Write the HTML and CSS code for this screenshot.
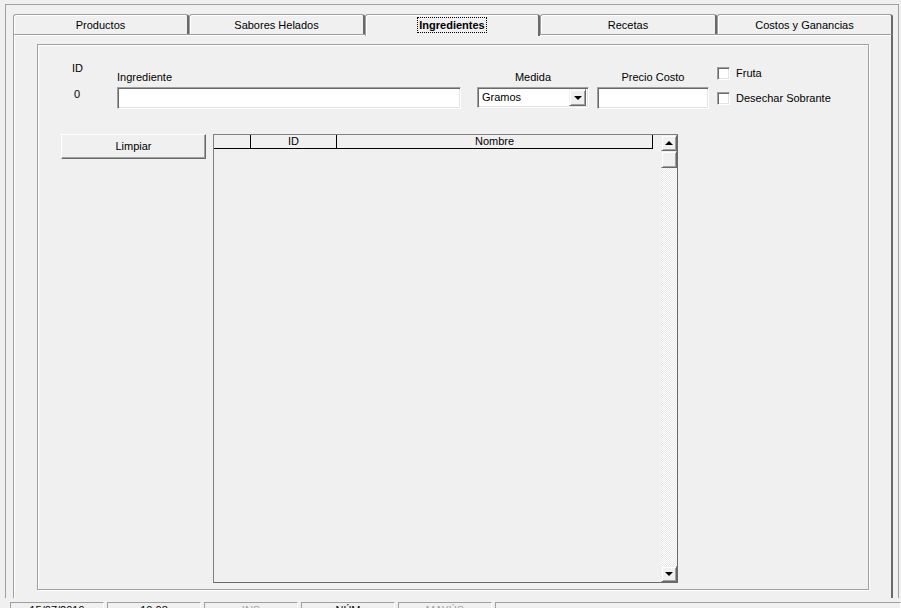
FILE: index.html
```html
<!DOCTYPE html>
<html>
<head>
<meta charset="utf-8">
<title>Ingredientes</title>
<link rel="stylesheet" href="styles.css">
</head>
<body>

<div class="frame">
    <div class="tabs">
        <div class="tab tab-1">Productos</div>
        <div class="tab tab-2">Sabores Helados</div>
        <div class="tab tab-3 selected"><span class="focus">Ingredientes</span></div>
        <div class="tab tab-4">Recetas</div>
        <div class="tab tab-5">Costos y Ganancias</div>
    </div>

    <div class="panel">
        <div class="group">
            <div class="fields">
                <div class="col-id">
                    <div class="label">ID</div>
                    <div class="label id-value">0</div>
                </div>
                <div class="col-name">
                    <div class="label">Ingrediente</div>
                    <div class="textbox"></div>
                </div>
                <div class="col-unit">
                    <div class="label centered">Medida</div>
                    <div class="combo">
                        <span class="combo-text">Gramos</span>
                        <span class="raised combo-button"><span class="arrow-down"></span></span>
                    </div>
                </div>
                <div class="col-price">
                    <div class="label centered">Precio Costo</div>
                    <div class="textbox"></div>
                </div>
                <div class="col-checks">
                    <div class="check-row"><span class="checkbox"></span><span class="label">Fruta</span></div>
                    <div class="check-row second"><span class="checkbox"></span><span class="label">Desechar Sobrante</span></div>
                </div>
            </div>

            <div class="lower">
                <div class="raised button">Limpiar</div>
                <div class="grid">
                    <div class="cells">
                        <div class="grid-header">
                            <div class="hcell hcell-fixed"></div>
                            <div class="hcell hcell-id">ID</div>
                            <div class="hcell hcell-name">Nombre</div>
                        </div>
                    </div>
                    <div class="vscroll">
                        <div class="raised scroll-button"><span class="arrow-up"></span></div>
                        <div class="raised scroll-thumb"></div>
                        <div class="scroll-track"></div>
                        <div class="raised scroll-button"><span class="arrow-down"></span></div>
                    </div>
                </div>
            </div>
        </div>
    </div>
</div>

<div class="status">
    <div class="status-panel">15/07/2019</div>
    <div class="status-panel">10:08</div>
    <div class="status-panel off">INS</div>
    <div class="status-panel">NÚM</div>
    <div class="status-panel off">MAYÚS</div>
    <div class="status-panel last"></div>
</div>

</body>
</html>
```

FILE: styles.css
```css
html, body {
    margin: 0;
    width: 901px;
    height: 608px;
    overflow: hidden;
}

body {
    background-color: rgb(240, 240, 240);
    font-family: "Liberation Sans", Arial, sans-serif;
    font-size: 11px;
    line-height: 13px;
    color: #000;
}

.frame {
    box-sizing: border-box;
    width: 894px;
    height: 594px;
    margin: 4px 0 0 5px;
    padding: 9px 5px 0 7px;
    border: 1px solid rgb(160, 160, 160);
    border-bottom: 0;
}

/* tab strip */

.tabs {
    display: flex;
    height: 20px;
}

.tab {
    box-sizing: border-box;
    height: 20px;
    padding-top: 4px;
    text-align: center;
    border-top: 1px solid rgb(160, 160, 160);
    border-left: 1px solid rgb(160, 160, 160);
    border-right: 2px solid rgb(105, 105, 105);
    border-radius: 3px 3px 0 0;
    box-shadow: inset 1px 1px 0 #fff;
    background-color: rgb(240, 240, 240);
}

.tab-1 { width: 176px; }
.tab-2 { width: 176px; }
.tab-3 { width: 175px; }
.tab-4 { width: 177px; }
.tab-5 { width: 176px; }

.tab.selected {
    position: relative;
    z-index: 1;
    height: 22px;
    padding-top: 2px;
    font-weight: bold;
}

.focus {
    display: inline-block;
    padding: 1px 1px 0 1px;
    line-height: 13px;
    border: 1px dotted #000;
}

.panel {
    box-sizing: border-box;
    height: 564px;
    padding: 9px 0 0 23px;
    border-top: 1px solid rgb(160, 160, 160);
    border-left: 1px solid rgb(160, 160, 160);
    border-right: 2px solid rgb(105, 105, 105);
    box-shadow: inset 1px 1px 0 #fff;
}

.group {
    box-sizing: border-box;
    width: 832px;
    height: 546px;
    border: 1px solid rgb(160, 160, 160);
    box-shadow: inset 1px 1px 0 #fff, 1px 1px 0 #fff;
}

/* top row of inputs */

.fields {
    display: flex;
    padding-left: 34px;
}

.label {
    line-height: 13px;
    white-space: nowrap;
}

.centered {
    text-align: center;
}

.col-id {
    width: 45px;
    margin-top: 17px;
}

.id-value {
    margin-top: 13px;
    padding-left: 2px;
}

.col-name {
    width: 344px;
    margin-top: 26px;
}

.col-unit {
    width: 112px;
    margin-top: 26px;
    margin-left: 16px;
}

.col-price {
    width: 112px;
    margin-top: 26px;
    margin-left: 8px;
}

.col-checks {
    margin-top: 22px;
    margin-left: 8px;
}

.textbox,
.combo,
.checkbox {
    box-sizing: border-box;
    background-color: #fff;
    border: 1px solid;
    border-color: rgb(160, 160, 160) #fff #fff rgb(160, 160, 160);
    box-shadow: inset 1px 1px 0 rgb(105, 105, 105), inset -1px -1px 0 rgb(227, 227, 227);
}

.textbox {
    height: 22px;
    margin-top: 3px;
}

.combo {
    display: flex;
    align-items: center;
    height: 21px;
    margin-top: 3px;
    padding: 2px 2px 2px 4px;
}

.combo-text {
    flex: 1;
}

.raised {
    box-sizing: border-box;
    background-color: rgb(240, 240, 240);
    border: 1px solid;
    border-color: rgb(240, 240, 240) rgb(105, 105, 105) rgb(105, 105, 105) rgb(240, 240, 240);
    box-shadow: inset 1px 1px 0 #fff, inset -1px -1px 0 rgb(160, 160, 160);
}

.combo-button {
    display: flex;
    align-items: center;
    justify-content: center;
    width: 17px;
    height: 17px;
}

.arrow-down {
    width: 0;
    height: 0;
    border-left: 4px solid transparent;
    border-right: 4px solid transparent;
    border-top: 4px solid #000;
}

.arrow-up {
    width: 0;
    height: 0;
    border-left: 4px solid transparent;
    border-right: 4px solid transparent;
    border-bottom: 4px solid #000;
}

.check-row {
    display: flex;
    align-items: center;
    height: 13px;
}

.check-row.second {
    margin-top: 12px;
}

.checkbox {
    width: 13px;
    height: 13px;
    margin-right: 6px;
}

/* button and grid */

.lower {
    display: flex;
    padding-left: 23px;
    margin-top: 25px;
}

.button {
    width: 145px;
    height: 25px;
    margin-right: 7px;
    text-align: center;
    line-height: 23px;
    border-color: #fff rgb(105, 105, 105) rgb(105, 105, 105) #fff;
    box-shadow: inset -1px -1px 0 rgb(160, 160, 160);
}

.grid {
    box-sizing: border-box;
    display: flex;
    width: 465px;
    height: 449px;
    border: 1px solid;
    border-color: rgb(128, 128, 128) rgb(105, 105, 105) rgb(105, 105, 105) rgb(128, 128, 128);
}

.cells {
    flex: 1;
}

.grid-header {
    display: flex;
    height: 14px;
}

.hcell {
    box-sizing: border-box;
    height: 14px;
    text-align: center;
    line-height: 13px;
    border-right: 1px solid #000;
    border-bottom: 1px solid #000;
}

.hcell-fixed { width: 37px; }
.hcell-id { width: 86px; }
.hcell-name { width: 316px; }

.vscroll {
    display: flex;
    flex-direction: column;
    width: 16px;
}

.scroll-button {
    display: flex;
    align-items: center;
    justify-content: center;
    height: 16px;
}

.scroll-thumb {
    height: 17px;
}

.scroll-track {
    flex: 1;
    background: repeating-conic-gradient(#fff 0 25%, rgb(232, 232, 232) 0 50%) 0 0 / 2px 2px;
}

/* status bar */

.status {
    display: flex;
    gap: 3px;
    margin-top: 4px;
    padding-left: 10px;
}

.status-panel {
    box-sizing: border-box;
    width: 94px;
    height: 18px;
    padding-top: 1px;
    text-align: center;
    border: 1px solid;
    border-color: rgb(160, 160, 160) #fff #fff rgb(160, 160, 160);
}

.status-panel.off {
    color: rgb(160, 160, 160);
}

.status-panel.last {
    flex: 1;
}
```
